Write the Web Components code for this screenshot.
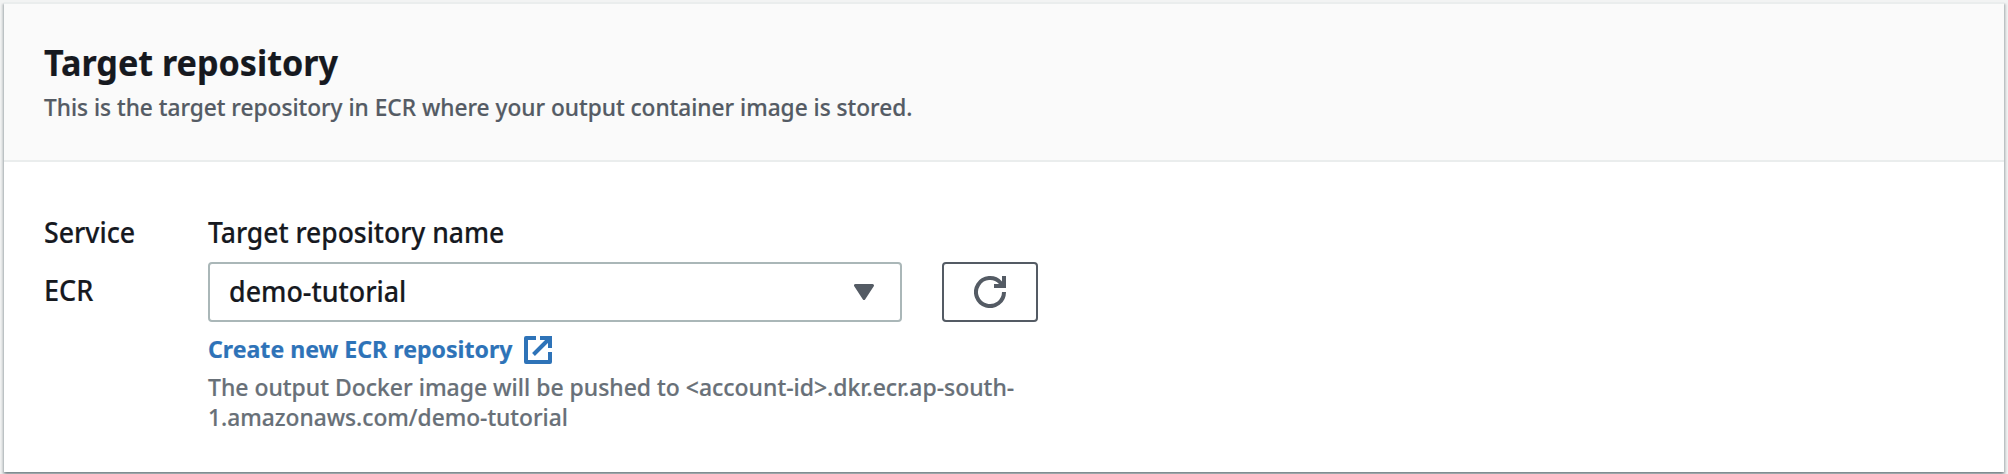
<!DOCTYPE html>
<html lang="en">
<head>
<meta charset="utf-8">
<title>Target repository</title>
<style>
body{margin:0;height:474px;overflow:hidden;background:#f2f3f3;font-family:"Noto Sans","Open Sans",sans-serif;color:#16191f}
</style>
</head>
<body>
<ecr-target-form></ecr-target-form>
<script>
const define = (name, html) => customElements.define(name, class extends HTMLElement {
  constructor() {
    super();
    const t = document.createElement('template');
    t.innerHTML = html;
    this.attachShadow({ mode: 'open' }).append(t.content.cloneNode(true));
  }
});

/* One line of narrowed text; --fit is the horizontal scale */
define('fit-text', `
<style>
:host{display:block;white-space:nowrap;transform:scaleX(var(--fit,.945));transform-origin:0 0;width:max-content;-webkit-text-stroke:.2px currentColor}
</style><slot></slot>`);

define('aws-card', `
<style>
:host{display:block;margin:2px 4px 0;height:468px;background:#fff;border-top:2px solid #eaeded;box-shadow:0 2px 2px 0 rgba(0,28,36,.3),2px 2px 2px 0 rgba(0,28,36,.15),-2px 2px 2px 0 rgba(0,28,36,.15)}
header{background:#fafafa;border-bottom:2px solid #eaeded;padding:37px 40px 38px;display:grid;gap:7px}
.body{padding:50px 40px 0}
</style>
<header><slot name="title"></slot><slot name="description"></slot></header>
<div class="body"><slot></slot></div>`);

define('aws-select', `
<style>
:host{display:flex;box-sizing:border-box;width:694px;height:60px;border:2px solid #aab7b8;border-radius:4px;background:#fff;align-items:center;justify-content:space-between;padding:0 26px 2px 19px;font-size:28px;line-height:40px;font-weight:500}
svg{display:block;margin-top:2px}
</style>
<slot></slot>
<svg width="20" height="16" viewBox="0 0 20 16"><path d="M1.500 1.500H18.500L10 14.500Z" fill="#545b64" stroke="#545b64" stroke-width="3" stroke-linejoin="round"/></svg>`);

define('refresh-button', `
<style>
:host{display:block}
button{display:grid;place-items:center;box-sizing:border-box;width:96px;height:60px;margin:0;padding:0;border:2px solid #545b64;border-radius:4px;background:#fff}
svg{display:block}
</style>
<button aria-label="Refresh"><svg width="32" height="32" viewBox="0 0 32 32" fill="none" stroke="#545b64" stroke-width="4"><path d="M30 16A14 14 0 1 1 26.500 6.800L29 10"/><path d="M20 10H30V0"/></svg></button>`);

define('external-link', `
<style>
:host{display:flex;gap:12px;height:30px;font-size:24px;line-height:30px;font-weight:700;color:#2e73b8}
.label{width:304px}
svg{display:block;margin-top:2px}
</style>
<div class="label"><slot></slot></div>
<svg width="28" height="28" viewBox="0 0 28 28" fill="none" stroke="currentColor" stroke-width="4"><path d="M12 2H2V26H26V16" stroke-linejoin="round"/><path d="M16 2H26V12M26 2L9.500 18.500"/></svg>`);

define('ecr-target-form', `
<style>
:host{display:block}
.title{font-size:36px;line-height:44px;font-weight:700;--fit:.948}
.desc{font-size:24px;line-height:30px;font-weight:500;color:#545b64;--fit:.944}
.cols{display:grid;grid-template-columns:164px max-content;font-size:28px;line-height:40px;font-weight:500}
.service{display:grid;gap:18px;align-content:start}
.repo{display:grid;row-gap:10px}
.row{display:flex;gap:40px}
external-link{margin-top:2px}
.help{margin-top:-2px;font-size:24px;line-height:30px;color:#687078;--fit:.956}
.help+.help{margin-top:-10px;--fit:.947}
</style>
<aws-card>
  <fit-text slot="title" class="title">Target repository</fit-text>
  <fit-text slot="description" class="desc">This is the target repository in ECR where your output container image is stored.</fit-text>
  <div class="cols">
    <div class="service"><fit-text style="--fit:.955">Service</fit-text><fit-text style="--fit:.965">ECR</fit-text></div>
    <div class="repo">
      <fit-text>Target repository name</fit-text>
      <div class="row"><aws-select><fit-text style="--fit:.958">demo-tutorial</fit-text></aws-select><refresh-button></refresh-button></div>
      <external-link><fit-text style="--fit:.963">Create new ECR repository</fit-text></external-link>
      <fit-text class="help">The output Docker image will be pushed to &lt;account-id&gt;.dkr.ecr.ap-south-</fit-text>
      <fit-text class="help">1.amazonaws.com/demo-tutorial</fit-text>
    </div>
  </div>
</aws-card>
`);
</script>
</body>
</html>
